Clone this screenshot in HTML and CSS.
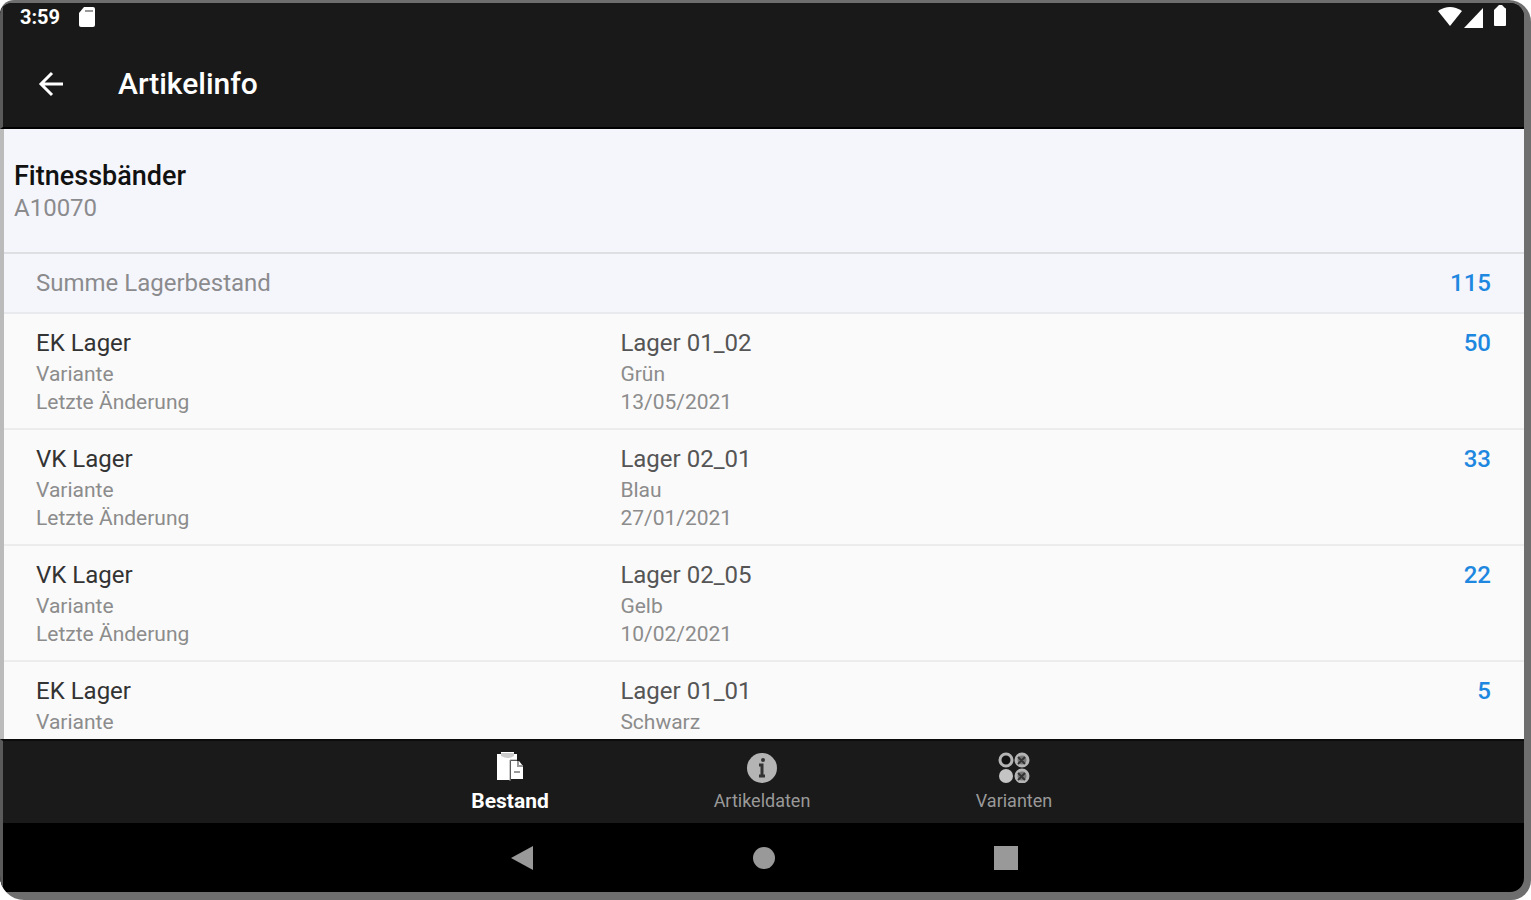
FILE: index.html
```html
<!DOCTYPE html>
<html lang="de">
  <head>
    <meta charset="UTF-8" />
    <meta name="viewport" content="width=device-width, initial-scale=1.0" />
    <title>Artikelinfo</title>
    <link rel="stylesheet" href="styles.css" />
  </head>
  <body>
    <div class="device">
      <div class="screen">
        <div class="status-bar">
          <span class="clock">3:59</span>
          <svg class="sd-card" width="18" height="20" viewBox="0 0 18 20">
            <path d="M6 0h9q2 0 2 2v16q0 2-2 2H3q-2 0-2-2V6z" fill="#fff" />
            <path d="M7 4h8" stroke="#999" stroke-width="2" />
          </svg>
          <svg class="signals" width="70" height="24" viewBox="0 0 70 24">
            <path d="M0 6q12-8 24 0L12 21z" fill="#fff" />
            <path d="M45 3v20H26z" fill="#fff" />
            <path d="M58 3l3-3h3l3 3q1 0 1 1v16q0 1-1 1h-10q-1 0-1-1V5z" fill="#fff" />
          </svg>
        </div>

        <header class="app-bar">
          <button class="back" aria-label="Zurück">
            <svg width="26" height="26" viewBox="0 0 26 26">
              <path d="M14 2L3 13l11 11M3 13h22" fill="none" stroke="#fff" stroke-width="3" />
            </svg>
          </button>
          <h1>Artikelinfo</h1>
        </header>

        <main>
          <section class="article">
            <h2>Fitnessbänder</h2>
            <p>A10070</p>
          </section>

          <div class="total">
            <span>Summe Lagerbestand</span>
            <span class="amount">115</span>
          </div>

          <ul class="stock-list">
            <li class="stock">
              <div>
                <h3>EK Lager</h3>
                <p>Variante</p>
                <p>Letzte Änderung</p>
              </div>
              <div>
                <h4>Lager 01_02</h4>
                <p>Grün</p>
                <p>13/05/2021</p>
              </div>
              <span class="amount">50</span>
            </li>
            <li class="stock">
              <div>
                <h3>VK Lager</h3>
                <p>Variante</p>
                <p>Letzte Änderung</p>
              </div>
              <div>
                <h4>Lager 02_01</h4>
                <p>Blau</p>
                <p>27/01/2021</p>
              </div>
              <span class="amount">33</span>
            </li>
            <li class="stock">
              <div>
                <h3>VK Lager</h3>
                <p>Variante</p>
                <p>Letzte Änderung</p>
              </div>
              <div>
                <h4>Lager 02_05</h4>
                <p>Gelb</p>
                <p>10/02/2021</p>
              </div>
              <span class="amount">22</span>
            </li>
            <li class="stock">
              <div>
                <h3>EK Lager</h3>
                <p>Variante</p>
              </div>
              <div>
                <h4>Lager 01_01</h4>
                <p>Schwarz</p>
              </div>
              <span class="amount">5</span>
            </li>
          </ul>
        </main>

        <nav class="tabs">
          <button class="tab active">
            <svg width="30" height="32" viewBox="0 0 30 32">
              <path d="M2 3h4V1h13v2h3v6h-7v20H2z" fill="#fff" />
              <path d="M6 2h13v3q-6 4-13 0z" fill="#ccc" />
              <path d="M16 10h8l4 5v13H16z" fill="#fff" />
              <path d="M15 30V9h7" fill="none" stroke="#999" />
              <path d="M23 10v5h5M19 21h6" fill="none" stroke="#999" stroke-width="2" />
            </svg>
            Bestand
          </button>
          <button class="tab">
            <svg width="30" height="32" viewBox="0 0 30 32">
              <circle cx="15" cy="17" r="15" fill="#b4b4b4" />
              <circle cx="16" cy="9" r="2" fill="#333" />
              <path d="M12 14h3v11M12 25h6" fill="none" stroke="#333" stroke-width="3" />
            </svg>
            Artikeldaten
          </button>
          <button class="tab">
            <svg width="32" height="32" viewBox="0 0 32 32">
              <circle cx="8" cy="9" r="6" fill="#111" stroke="#b4b4b4" stroke-width="3" />
              <circle cx="24" cy="9" r="6" fill="#777" stroke="#b4b4b4" stroke-width="3" />
              <circle cx="8" cy="25" r="7" fill="#c4c4c4" />
              <circle cx="24" cy="25" r="6" fill="#777" stroke="#b4b4b4" stroke-width="3" />
              <path d="M20 6l7 7M20 13l7-7M20 22l7 7M20 29l7-7" stroke="#333" stroke-width="2" />
            </svg>
            Varianten
          </button>
        </nav>

        <div class="system-bar">
          <button aria-label="Zurück">
            <svg width="24" height="26" viewBox="0 0 24 26"><path d="M1 13L23 1v24z" fill="#999" /></svg>
          </button>
          <button aria-label="Startseite">
            <svg width="24" height="24" viewBox="0 0 24 24"><circle cx="12" cy="12" r="11" fill="#999" /></svg>
          </button>
          <button aria-label="Übersicht">
            <svg width="24" height="24" viewBox="0 0 24 24"><path d="M0 0h24v24H0z" fill="#999" /></svg>
          </button>
        </div>
      </div>
    </div>
  </body>
</html>
```

FILE: styles.css
```css
* {
  box-sizing: border-box;
}
body {
  margin: 0;
  background-color: #fff;
  font-family: Roboto, "Liberation Sans", sans-serif;
}
h1,
h2,
h3,
h4,
p,
ul {
  margin: 0;
  padding: 0;
}
button {
  padding: 0;
  border: none;
  background: none;
  font-family: inherit;
  cursor: pointer;
}
svg {
  display: block;
}

/* Device frame, the left edge is drawn by the bars themselves */
.device {
  height: 100vh;
  padding: 3px 7px 8px 0;
  overflow: hidden;
  background-color: #6e6e6e;
  border-radius: 14px 22px 20px 24px;
}
.screen {
  display: flex;
  flex-direction: column;
  height: 100%;
  overflow: hidden;
  background-color: #000;
  border-radius: 12px 14px 14px 0;
}
.status-bar,
.app-bar,
.tabs,
.system-bar {
  border-left: 3px solid #5a5a5a;
}

.status-bar {
  display: flex;
  align-items: center;
  height: 32px;
  padding: 0 16px 4px 17px;
  background-color: #191919;
  color: #fff;
}
.clock {
  font-size: 20px;
  font-weight: 700;
}
.sd-card {
  margin-left: 18px;
}
.signals {
  margin-left: auto;
}

.app-bar {
  display: flex;
  align-items: center;
  height: 94px;
  padding: 5px 36px 0 35px;
  border-bottom: 2px solid #000;
  background-color: #191919;
  color: #fff;
}
.back {
  margin-right: 54px;
}
.app-bar h1 {
  font-size: 30px;
  font-weight: 500;
}

/* Content */
main {
  flex: 1;
  min-height: 0;
  overflow: hidden;
  background-color: #fafafa;
  border-left: 4px solid #bbb;
}
.article {
  height: 125px;
  padding: 30px 10px 0;
  border-bottom: 2px solid #dedfe3;
  background-color: #f5f6fc;
}
.article h2 {
  font-size: 27px;
  font-weight: 500;
  line-height: 34px;
  color: #111;
}
.article p {
  font-size: 24px;
  line-height: 30px;
  color: #8b8b8e;
}
.total {
  display: flex;
  align-items: center;
  justify-content: space-between;
  height: 60px;
  padding: 0 33px 0 32px;
  border-bottom: 2px solid #e9eaed;
  background-color: #f5f6fc;
  font-size: 24px;
  color: #8b8b8e;
}
.amount {
  font-size: 24px;
  font-weight: 500;
  color: #1e88e0;
  text-align: right;
}
.stock-list {
  list-style: none;
}
.stock {
  display: grid;
  grid-template-columns: 2fr 2fr 1fr;
  column-gap: 12px;
  padding: 12px 33px 12px 32px;
  border-bottom: 2px solid #ececec;
}
.stock h3,
.stock h4,
.stock .amount {
  font-size: 24px;
  line-height: 34px;
}
.stock h3 {
  font-weight: 400;
  color: #333;
}
.stock h4 {
  font-weight: 400;
  color: #555;
}
.stock p {
  font-size: 21px;
  line-height: 28px;
  color: #8c8c8c;
}

/* Bottom tabs */
.tabs {
  display: flex;
  justify-content: center;
  height: 84px;
  padding-right: 3px;
  border-top: 2px solid #0c0c0c;
  background-color: #1a1a1a;
}
.tab {
  display: flex;
  flex-direction: column;
  align-items: center;
  gap: 6px;
  width: 252px;
  padding-top: 10px;
  font-size: 18px;
  line-height: 24px;
  color: #999;
}
.tab.active {
  font-size: 21px;
  font-weight: 700;
  color: #fff;
}

.system-bar {
  display: flex;
  justify-content: center;
  height: 69px;
}
.system-bar button {
  display: flex;
  align-items: center;
  justify-content: center;
  width: 242px;
}
```
